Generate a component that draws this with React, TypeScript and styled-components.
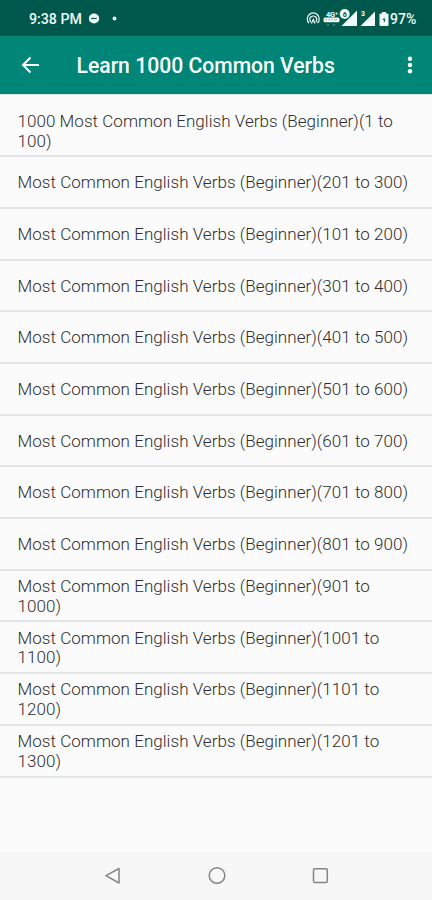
import React from "react";
import styled, { createGlobalStyle } from "styled-components";

const GlobalStyle = createGlobalStyle`
  * { box-sizing: border-box; }
  body { margin: 0; background: #fafafa; font-family: Roboto, "Noto Sans", sans-serif; }
`;

const Screen = styled.div`
  width: 432px;
  height: 900px;
  display: flex;
  flex-direction: column;
  overflow: hidden;
  background: #fbfbfb;
`;

const StatusBar = styled.header`
  height: 36px;
  flex: none;
  display: flex;
  align-items: center;
  padding: 1px 15px 0 29px;
  background: #00574b;
  color: #f1faf7;
`;

const Clock = styled.span`
  width: 60px;
  font-size: 14.2px;
  font-weight: 500;
  white-space: nowrap;
`;

const StatusIcons = styled.div`
  display: flex;
  margin-left: auto;
  align-items: center;
`;

const Battery = styled.span`
  width: 27px;
  font-size: 14px;
  font-weight: 500;
  white-space: nowrap;
`;

const AppBar = styled.div`
  height: 58px;
  flex: none;
  display: flex;
  align-items: center;
  padding: 0 15px 0 20px;
  background: #008577;
  color: #f8fffd;
`;

const IconButton = styled.button`
  display: flex;
  padding: 0;
  border: 0;
  background: none;
  color: inherit;
`;

const Title = styled.h1`
  flex: 1;
  margin: 2px 0 0 36.5px;
  font-size: 21.15px;
  line-height: 26px;
  font-weight: 500;
  white-space: nowrap;
`;

const List = styled.ul`
  flex: 1;
  margin: 0;
  padding: 0;
  list-style: none;
  border-top: 1px solid #dce4e3;
`;

const Row = styled.li<{ $tall?: boolean }>`
  height: ${(p) => (p.$tall ? 62.3 : 51.7)}px;
  display: flex;
  align-items: center;
  padding: ${(p) => (p.$tall ? 13 : 2)}px 17.5px 0;
  border-bottom: 2px solid #e4e6e6;
  color: #2e2e2e;
  font-size: 17px;
  font-weight: 300;
  letter-spacing: 0.04px;
  line-height: 19.8px;
  white-space: pre;
`;

const NavBar = styled.nav`
  height: 48px;
  flex: none;
  display: flex;
  justify-content: space-between;
  align-items: center;
  padding: 0 102px;
  background: #f7f7f7;
  color: #858585;
`;

const rows = [
  "1000 Most Common English Verbs (Beginner)(1 to\n100)",
  ...["201 to 300", "101 to 200", "301 to 400", "401 to 500", "501 to 600", "601 to 700",
    "701 to 800", "801 to 900", "901 to\n1000", "1001 to\n1100", "1101 to\n1200", "1201 to\n1300",
  ].map((range) => `Most Common English Verbs (Beginner)(${range})`),
];

const ChatIcon = () => (
  <svg width="28" height="14" viewBox="0 0 28 14" fill="currentColor">
    <ellipse cx="5" cy="6.5" rx="5.2" ry="5" />
    <path d="M2.200 7l1.900-.9 1.800.6L7.800 6" fill="none" stroke="#00574b" strokeWidth="1.2" />
    <circle cx="25.5" cy="6.5" r="1.9" />
  </svg>
);

const SignalIcons = () => (
  <svg width="84" height="20" viewBox="306 8 84 20" fill="currentColor">
    <g fill="none" stroke="currentColor" strokeWidth="1.2">
      <path d="M309 22.2a6 6 0 1 1 8.500 0" />
      <path d="M310.800 21a3.500 3.500 0 1 1 4.900 0" />
      <path d="M311.500 22.500l1.750-4 1.750 4" />
    </g>
    <text x="326" y="15.8" fontSize="7.5" fontWeight="700" textLength="12">4G⁺</text>
    <rect x="323.500" y="16.500" width="16" height="4.800" rx="1.500" />
    <path d="M325 18.700h2m1 0h2m1 0h2m1 0h3" stroke="#00574b" strokeWidth=".4" />
    <path d="M327 24h2m4 0h2" stroke="currentColor" strokeWidth="1" opacity=".5" />
    <path d="M341.500 25L357 9.500V25z" />
    <circle cx="344.700" cy="13" r="5" />
    <text x="342.800" y="15.500" fontSize="7" fontWeight="700" fill="#00574b">6</text>
    <text x="361" y="15" fontSize="7" fontWeight="700">3</text>
    <path d="M360.500 25L375 10.500V25z" />
    <path d="M382 11h4v1.500h1.500q1 0 1 1V24q0 1-1 1h-7q-1 0-1-1V13.500q0-1 1-1h1.500z" />
    <path d="M384.500 16l-1.800 3h1.200v3l1.800-3.500h-1.200z" fill="#00574b" />
  </svg>
);

export default function App() {
  return (
    <Screen>
      <GlobalStyle />
      <StatusBar>
        <Clock>9:38 PM</Clock>
        <ChatIcon />
        <StatusIcons>
          <SignalIcons />
          <Battery>97%</Battery>
        </StatusIcons>
      </StatusBar>
      <AppBar>
        <IconButton aria-label="Back">
          <svg width="20" height="20" viewBox="0 0 20 20" fill="none" stroke="currentColor" strokeWidth="2">
            <path d="M19 10H3M10.500 2.500L3 10l7.500 7.500" />
          </svg>
        </IconButton>
        <Title>Learn 1000 Common Verbs</Title>
        <IconButton aria-label="More options">
          <svg width="14" height="20" viewBox="0 0 14 20" fill="currentColor">
            <circle cx="7" cy="3.700" r="2.200" />
            <circle cx="7" cy="10" r="2.200" />
            <circle cx="7" cy="16.300" r="2.200" />
          </svg>
        </IconButton>
      </AppBar>
      <List>
        {rows.map((text, i) => (
          <Row key={text} $tall={i === 0}>{text}</Row>
        ))}
      </List>
      <NavBar>
        <svg width="20" height="20" viewBox="0 0 20 20" fill="none" stroke="currentColor" strokeWidth="1.500" strokeLinejoin="round">
          <path d="M17 2.500v14.500L4 9.700z" />
        </svg>
        <svg width="20" height="20" viewBox="-1 0 20 20" fill="none" stroke="currentColor" strokeWidth="1.500">
          <circle cx="10" cy="9.500" r="7.800" />
        </svg>
        <svg width="20" height="20" viewBox="0 0 20 20" fill="none" stroke="currentColor" strokeWidth="1.500">
          <rect x="3.500" y="2.700" width="13.800" height="13.800" rx="1.500" />
        </svg>
      </NavBar>
    </Screen>
  );
}
